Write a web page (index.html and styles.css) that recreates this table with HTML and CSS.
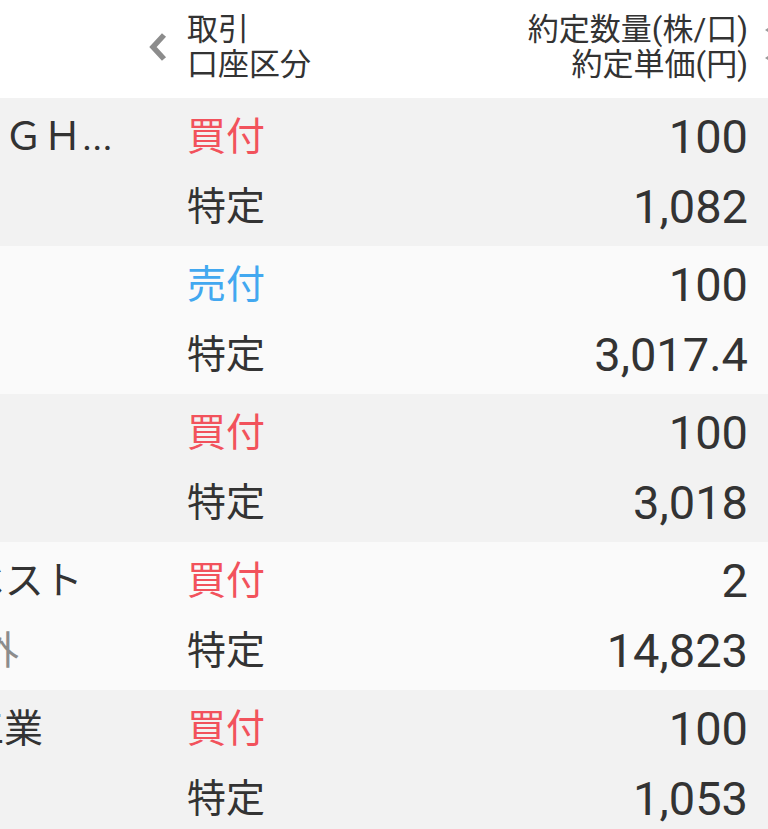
FILE: index.html
```html
<!DOCTYPE html>
<html lang="ja">
<head>
<meta charset="utf-8">
<title>約定一覧</title>
<link rel="stylesheet" href="styles.css">
</head>
<body>
<div class="table">
  <div class="row head">
    <div class="c-name">
      <svg class="chev" width="20" height="32" viewBox="0 0 20 32"><path d="M16 4 L5 16 L16 28" fill="none" stroke="#8c8c8c" stroke-width="5.5"/></svg>
    </div>
    <div class="c-type"><div>取引</div><div>口座区分</div></div>
    <div class="c-num"><div>約定数量(株/口)</div><div>約定単価(円)</div></div>
    <div class="c-more">
      <svg width="12" height="70" viewBox="0 0 12 70"><path d="M8 14 L2 18 L8 22 Z M8 42 L2 46 L8 50 Z" fill="#9a9a9a"/></svg>
    </div>
    <div class="c-next"><div>約定日時</div><div>受渡日</div></div>
  </div>

  <div class="row item odd">
    <div class="c-name"><div class="nm">ＮＳＫＫＧＨ...</div><div class="sub">1234</div></div>
    <div class="c-type"><div class="buy">買付</div><div>特定</div></div>
    <div class="c-num"><div>100</div><div>1,082</div></div>
    <div class="c-more"></div>
    <div class="c-next"><div>10/02</div><div>10/04</div></div>
  </div>

  <div class="row item even">
    <div class="c-name"><div class="nm">トヨタ</div><div class="sub">7203</div></div>
    <div class="c-type"><div class="sell">売付</div><div>特定</div></div>
    <div class="c-num"><div>100</div><div>3,017.4</div></div>
    <div class="c-more"></div>
    <div class="c-next"><div>10/02</div><div>10/04</div></div>
  </div>

  <div class="row item odd">
    <div class="c-name"><div class="nm">トヨタ</div><div class="sub">7203</div></div>
    <div class="c-type"><div class="buy">買付</div><div>特定</div></div>
    <div class="c-num"><div>100</div><div>3,018</div></div>
    <div class="c-more"></div>
    <div class="c-next"><div>10/01</div><div>10/03</div></div>
  </div>

  <div class="row item even">
    <div class="c-name"><div class="nm">Ｊインベスト</div><div class="sub sub-shift">東証海外</div></div>
    <div class="c-type"><div class="buy">買付</div><div>特定</div></div>
    <div class="c-num"><div>2</div><div>14,823</div></div>
    <div class="c-more"></div>
    <div class="c-next"><div>10/01</div><div>10/03</div></div>
  </div>

  <div class="row item odd">
    <div class="c-name"><div class="nm">三菱重工業</div><div class="sub">7011</div></div>
    <div class="c-type"><div class="buy">買付</div><div>特定</div></div>
    <div class="c-num"><div>100</div><div>1,053</div></div>
    <div class="c-more"></div>
    <div class="c-next"><div>09/30</div><div>10/02</div></div>
  </div>
</div>
</body>
</html>
```

FILE: styles.css
```css
html, body {
  margin: 0;
  padding: 0;
}
body {
  overflow: hidden;
  background: #fafafa;
  font-family: Roboto, "Noto Sans CJK JP", sans-serif;
  color: #333333;
}
.table {
  margin-left: -152px;
  width: 1120px;
}
.row {
  display: grid;
  grid-template-columns: 337px 150px 1fr 20px 200px;
}
.head {
  height: 98px;
  box-sizing: border-box;
  padding-top: 12px;
  background: #ffffff;
  font-size: 31px;
  line-height: 35px;
}
.head .c-name {
  height: 70px;
  display: flex;
  align-items: center;
  justify-content: flex-end;
  padding-right: 17px;
}
.chev {
  display: block;
}
.c-type {
  padding-left: 2px;
  white-space: nowrap;
}
.c-num {
  text-align: right;
  white-space: nowrap;
}
.c-more {
  padding-left: 15px;
}
.c-more svg {
  display: block;
}
.c-next {
  padding-left: 20px;
  white-space: nowrap;
}
.c-name {
  overflow: hidden;
  white-space: nowrap;
}
.item {
  height: 148px;
  box-sizing: border-box;
  padding: 4px 0;
  font-size: 39px;
  line-height: 70px;
}
.item .c-num {
  font-size: 47px;
}
.odd {
  background: #f2f2f2;
}
.even {
  background: #fafafa;
}
.buy {
  color: #f2525c;
}
.sell {
  color: #42a8f0;
}
.sub {
  color: #8c8c8c;
}
.sub-shift {
  padding-left: 15px;
}
```
